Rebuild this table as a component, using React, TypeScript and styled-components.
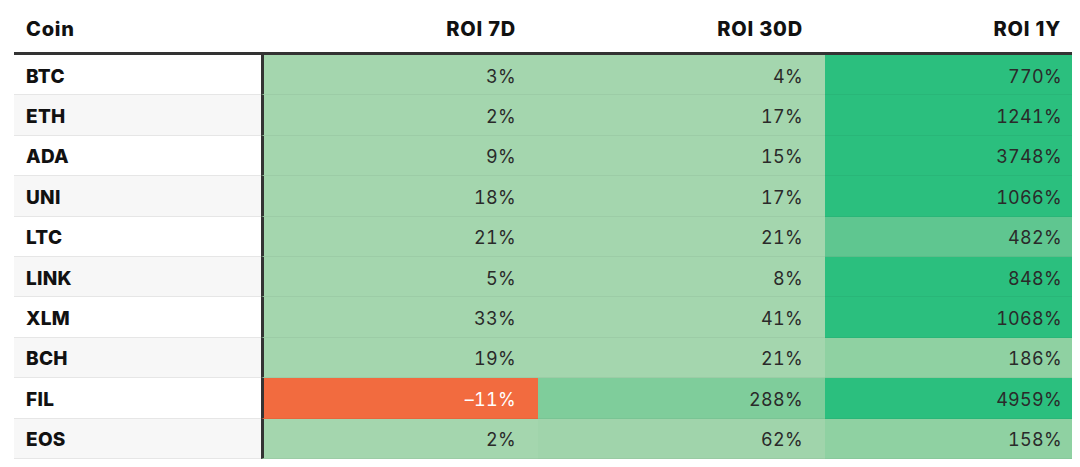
import React from "react";
import styled, { createGlobalStyle } from "styled-components";

const GlobalStyle = createGlobalStyle`
  html, body {
    margin: 0;
    padding: 0;
    background: #ffffff;
  }
  body {
    font-family: Inter, "Noto Sans", "Liberation Sans", sans-serif;
    color: #1a1a1a;
  }
`;

type Row = {
  coin: string;
  d7: number;
  d30: number;
  y1: number;
};

const ROWS: Row[] = [
  { coin: "BTC", d7: 3, d30: 4, y1: 770 },
  { coin: "ETH", d7: 2, d30: 17, y1: 1241 },
  { coin: "ADA", d7: 9, d30: 15, y1: 3748 },
  { coin: "UNI", d7: 18, d30: 17, y1: 1066 },
  { coin: "LTC", d7: 21, d30: 21, y1: 482 },
  { coin: "LINK", d7: 5, d30: 8, y1: 848 },
  { coin: "XLM", d7: 33, d30: 41, y1: 1068 },
  { coin: "BCH", d7: 19, d30: 21, y1: 186 },
  { coin: "FIL", d7: -11, d30: 288, y1: 4959 },
  { coin: "EOS", d7: 2, d30: 62, y1: 158 },
];

// rough colour scale taken from the picture
const heat = (v: number) => {
  if (v < 0) return "#f26b3f";
  if (v >= 700) return "#2bbf7e";
  if (v >= 400) return "#5fc690";
  if (v >= 250) return "#7fcd9b";
  if (v >= 150) return "#8fd1a2";
  if (v >= 50) return "#a0d4ab";
  return "#a4d6ae";
};

const fmt = (v: number) => (v < 0 ? `\u2013${Math.abs(v)}%` : `${v}%`);

const COLUMNS = "247px 277px 287px 247px";

export default function App() {
  return (
    <>
      <GlobalStyle />
      <Table>
        <HeadRow>
          <HeadCell>Coin</HeadCell>
          <HeadCell $right $pad={22}>ROI 7D</HeadCell>
          <HeadCell $right $pad={22}>ROI 30D</HeadCell>
          <HeadCell $right $pad={11}>ROI 1Y</HeadCell>
        </HeadRow>
        {ROWS.map((r, i) => (
          <BodyRow key={r.coin}>
            <CoinCell $odd={i % 2 === 1}>{r.coin}</CoinCell>
            <ValueCell $bg={heat(r.d7)} $neg={r.d7 < 0} $pad={22} $first>
              {fmt(r.d7)}
            </ValueCell>
            <ValueCell $bg={heat(r.d30)} $neg={r.d30 < 0} $pad={22}>
              {fmt(r.d30)}
            </ValueCell>
            <ValueCell $bg={heat(r.y1)} $neg={r.y1 < 0} $pad={10}>
              {fmt(r.y1)}
            </ValueCell>
          </BodyRow>
        ))}
      </Table>
    </>
  );
}

const Table = styled.div`
  display: flex;
  flex-direction: column;
  margin-left: 14px;
  width: ${247 + 277 + 287 + 247}px;
`;

const HeadRow = styled.div`
  display: grid;
  grid-template-columns: ${COLUMNS};
  height: 55px;
  box-sizing: border-box;
  border-bottom: 3px solid #333333;
`;

const HeadCell = styled.div<{ $right?: boolean; $pad?: number }>`
  display: flex;
  align-items: center;
  justify-content: ${(p) => (p.$right ? "flex-end" : "flex-start")};
  padding: 6px ${(p) => p.$pad ?? 0}px 0 12px;
  font-size: 20px;
  font-weight: 800;
  color: #111111;
  letter-spacing: 0.8px;
`;

const BodyRow = styled.div`
  display: grid;
  grid-template-columns: ${COLUMNS};
  height: 40.4px;
`;

const CoinCell = styled.div<{ $odd: boolean }>`
  display: flex;
  align-items: center;
  padding: 3px 0 0 12px;
  background: ${(p) => (p.$odd ? "#f7f7f7" : "#ffffff")};
  border-bottom: 1px solid #e6e6e6;
  font-size: 19px;
  font-weight: 800;
  color: #111111;
  letter-spacing: 0.3px;
`;

const ValueCell = styled.div<{ $bg: string; $neg: boolean; $pad: number; $first?: boolean }>`
  display: flex;
  align-items: center;
  justify-content: flex-end;
  padding: 3px ${(p) => p.$pad}px 0 0;
  background: ${(p) => p.$bg};
  border-bottom: 1px solid rgba(0, 0, 0, 0.045);
  border-left: ${(p) => (p.$first ? "3px solid #333333" : "none")};
  font-size: 18px;
  font-weight: 400;
  font-variant-numeric: tabular-nums;
  letter-spacing: 0.3px;
  color: ${(p) => (p.$neg ? "#ffffff" : "#2a2a2a")};
`;
